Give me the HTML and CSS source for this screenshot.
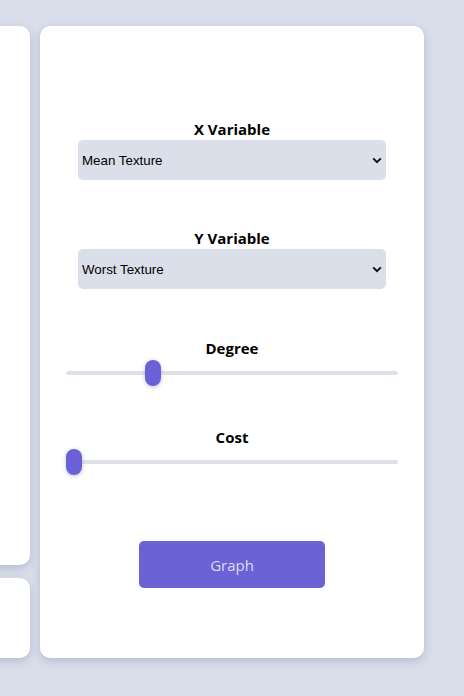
FILE: index.html
```html
<!DOCTYPE html>
<html>
<head>
<meta charset="utf-8">
<link rel="stylesheet" href="styles.css">
</head>
<body>
<div class="layout">
  <div class="left-col">
    <div class="card card-main"></div>
    <div class="card card-small"></div>
  </div>
  <div class="card panel">
    <div class="field">
      <label class="label" for="xvar">X Variable</label>
      <div class="select-wrap">
        <select id="xvar" class="select">
          <option>Mean Texture</option>
        </select>
        <svg class="chev" width="10" height="7" viewBox="0 0 10 7"><path d="M1.2 1.4 L5 5.2 L8.8 1.4" fill="none" stroke="#111" stroke-width="2"/></svg>
      </div>
    </div>
    <div class="field field-y">
      <label class="label" for="yvar">Y Variable</label>
      <div class="select-wrap">
        <select id="yvar" class="select">
          <option>Worst Texture</option>
        </select>
        <svg class="chev" width="10" height="7" viewBox="0 0 10 7"><path d="M1.2 1.4 L5 5.2 L8.8 1.4" fill="none" stroke="#111" stroke-width="2"/></svg>
      </div>
    </div>
    <div class="field field-deg">
      <label class="label" for="deg">Degree</label>
      <input id="deg" class="range" type="range" min="1" max="5" value="2">
    </div>
    <div class="field field-cost">
      <label class="label" for="cost">Cost</label>
      <input id="cost" class="range" type="range" min="0" max="10" value="0">
    </div>
    <button class="btn">Graph</button>
  </div>
</div>
</body>
</html>
```

FILE: styles.css
```css
html, body {
  margin: 0;
  padding: 0;
}
body {
  background: #d9deea;
  width: 464px;
  height: 696px;
  overflow: hidden;
  font-family: "Open Sans", "Noto Sans", sans-serif;
}
.layout {
  display: flex;
  gap: 10px;
  padding-top: 26px;
}
.left-col {
  width: 200px;
  margin-left: -170px;
  display: flex;
  flex-direction: column;
  gap: 13px;
}
.card {
  background: #ffffff;
  border-radius: 10px;
  box-shadow: 0 3px 8px rgba(60, 70, 110, 0.22);
}
.card-main {
  height: 539px;
}
.card-small {
  height: 80px;
}
.panel {
  width: 384px;
  height: 632px;
  box-sizing: border-box;
  padding: 93px 26px 0;
  display: flex;
  flex-direction: column;
  align-items: center;
}
.field {
  width: 100%;
  display: flex;
  flex-direction: column;
  align-items: center;
}
.field-y {
  margin-top: 48px;
}
.field-deg {
  margin-top: 49px;
}
.field-cost {
  margin-top: 41px;
}
.label {
  display: block;
  font-weight: 700;
  font-size: 15px;
  line-height: 20px;
  color: #000;
  text-align: center;
}
.select-wrap {
  position: relative;
  width: 308px;
  margin-top: 1px;
}
.select {
  appearance: none;
  -webkit-appearance: none;
  display: block;
  width: 100%;
  height: 40px;
  border: none;
  border-radius: 5px;
  background: #dadfea;
  font-family: "Liberation Sans", Arial, sans-serif;
  font-size: 13.33px;
  color: #000;
  padding: 0 0 0 4px;
  outline: none;
}
.chev {
  position: absolute;
  right: 4px;
  top: 17px;
  pointer-events: none;
}
.range {
  -webkit-appearance: none;
  appearance: none;
  width: 332px;
  height: 26px;
  margin: 2px 0 0;
  background: transparent;
}
.range::-webkit-slider-runnable-track {
  height: 4px;
  background: #dfe1ea;
  border-radius: 2px;
}
.range::-webkit-slider-thumb {
  -webkit-appearance: none;
  width: 16px;
  height: 26px;
  border-radius: 8px;
  background: #6a61d6;
  margin-top: -11px;
  box-shadow: 0 1px 4px rgba(60, 60, 120, 0.3);
}
.btn {
  margin-top: 66px;
  width: 186px;
  height: 47px;
  border: none;
  border-radius: 5px;
  background: #6b62d6;
  color: #dcdcf6;
  font-family: "Open Sans", "Noto Sans", sans-serif;
  font-size: 15px;
}
```
